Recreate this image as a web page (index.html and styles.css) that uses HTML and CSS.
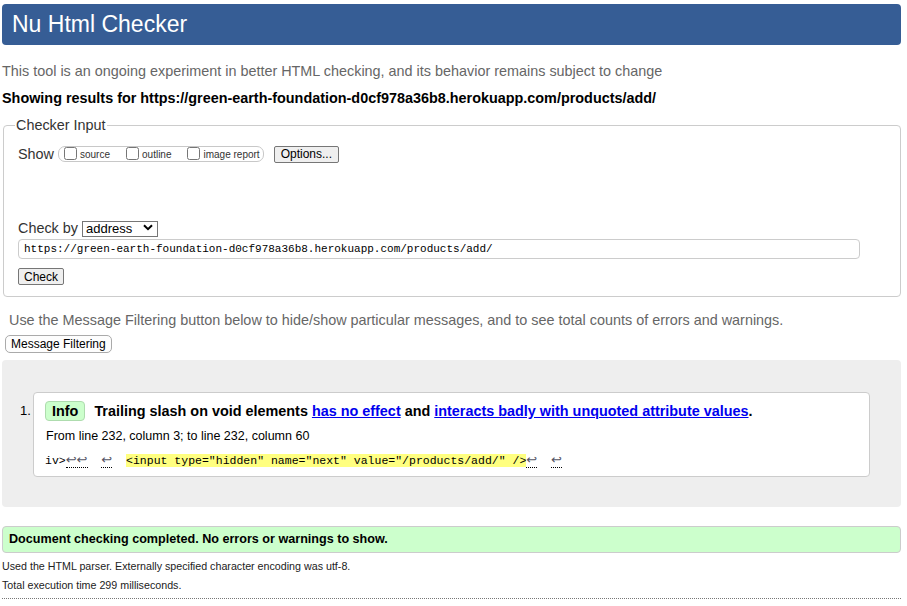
FILE: index.html
```html
<!DOCTYPE html>
<html lang="en">
<head>
<meta charset="utf-8">
<title>Showing results for https://green-earth-foundation-d0cf978a36b8.herokuapp.com/products/add/ - Nu Html Checker</title>
<link rel="stylesheet" href="styles.css">
</head>
<body>
<header class="banner"><h1 class="banner-title">Nu Html Checker</h1></header>
<p class="intro">This tool is an ongoing experiment in better HTML checking, and its behavior remains subject to change</p>
<p class="showing">Showing results for https://green-earth-foundation-d0cf978a36b8.herokuapp.com/products/add/</p>

<form class="checker">
  <div class="fieldset">
    <span class="legend">Checker Input</span>
    <div class="show-row">
      <span class="show-label">Show</span>
      <span class="opts">
        <label class="opt"><input type="checkbox" class="cb"><span>source</span></label>
        <label class="opt"><input type="checkbox" class="cb"><span>outline</span></label>
        <label class="opt"><input type="checkbox" class="cb"><span>image report</span></label>
      </span>
      <button type="button" class="btn btn-options">Options...</button>
    </div>
    <div class="checkby-row">
      <span class="checkby-label">Check by</span>
      <span class="selwrap">
        <select class="sel"><option>address</option></select>
        <svg class="chev" width="10" height="7" viewBox="0 0 10 7"><path d="M1 1.2 L5 5.2 L9 1.2" fill="none" stroke="#000" stroke-width="2"/></svg>
      </span>
    </div>
    <input class="url" type="text" value="https://green-earth-foundation-d0cf978a36b8.herokuapp.com/products/add/">
    <div class="check-row"><button type="button" class="btn btn-check">Check</button></div>
  </div>
</form>

<p class="filter-note">Use the Message Filtering button below to hide/show particular messages, and to see total counts of errors and warnings.</p>
<div class="filter-row"><button type="button" class="btn btn-filter">Message Filtering</button></div>

<section class="results">
  <ol class="msg-list">
    <li class="msg-row">
      <span class="num">1.</span>
      <div class="msg">
        <p class="msg-title"><span class="badge">Info</span><span class="msg-text">Trailing slash on void elements <a href="#" class="lnk">has no effect</a> and <a href="#" class="lnk">interacts badly with unquoted attribute values</a>.</span></p>
        <p class="loc">From line 232, column 3; to line 232, column 60</p>
        <p class="extract"><code class="code">iv&gt;<abbr class="lf">↩↩</abbr>  <abbr class="lf">↩</abbr>  <mark class="hl">&lt;input type="hidden" name="next" value="/products/add/" /&gt;</mark><abbr class="lf">↩</abbr>  <abbr class="lf">↩</abbr></code></p>
      </div>
    </li>
  </ol>
</section>

<p class="success">Document checking completed. No errors or warnings to show.</p>
<p class="meta meta-first">Used the HTML parser. Externally specified character encoding was utf-8.</p>
<p class="meta">Total execution time 299 milliseconds.</p>
<div class="rule"></div>
</body>
</html>
```

FILE: styles.css
```css
html { background: #fff; }
body {
  margin: 0;
  padding: 4px 6px 0 2px;
  font-family: "Liberation Sans", Arial, sans-serif;
  font-size: 14.4px;
  color: #000;
}
p { margin: 0; }

.banner-title {
  margin: 0;
  height: 41px;
  line-height: 41px;
  padding-left: 10px;
  background: #365d95;
  color: #fff;
  font-size: 23px;
  font-weight: normal;
  border-radius: 4px;
}

.intro {
  margin-top: 18px;
  line-height: 16px;
  color: #666;
}
.showing {
  margin-top: 11px;
  line-height: 16px;
  font-weight: bold;
}

.checker { margin: 0; }
.fieldset {
  position: relative;
  margin: 19px 0 0 1px;
  border: 1px solid #ccc;
  border-radius: 4px;
  padding: 20px 13px 11px 14px;
}
.legend {
  position: absolute;
  top: -9px;
  left: 11px;
  padding: 0 1px;
  background: #fff;
  line-height: 16px;
  color: #333;
}

.show-row {
  display: flex;
  align-items: center;
  height: 16px;
}
.show-label { color: #333; line-height: 16px; }
.opts {
  display: inline-flex;
  align-items: center;
  gap: 16px;
  height: 14px;
  margin-left: 4px;
  padding: 0 3px 0 5px;
  border: 1px solid #c8c8c8;
  border-radius: 7px;
}
.opt {
  display: inline-flex;
  align-items: center;
  gap: 3px;
  font-size: 10px;
  color: #333;
}
.cb {
  margin: 0;
  width: 13px;
  height: 13px;
  position: relative;
  top: -1px;
}

.btn {
  font-family: "Liberation Sans", Arial, sans-serif;
  font-size: 12px;
  color: #000;
  background: #efefef;
  border: 1px solid #767676;
  border-radius: 2px;
  padding: 0 5px;
  margin: 0;
  line-height: 14px;
  height: 17px;
}
.btn-options { margin-left: 10px; padding: 0 6px; }

.checkby-row {
  display: flex;
  align-items: center;
  height: 16px;
  margin-top: 58px;
}
.checkby-label { color: #333; }
.selwrap {
  position: relative;
  display: inline-block;
  margin-left: 4px;
  height: 16px;
}
.sel {
  appearance: none;
  -webkit-appearance: none;
  width: 76px;
  height: 16px;
  margin: 0;
  padding: 0 0 0 3px;
  border: 1px solid #767676;
  border-radius: 0;
  background: #fff;
  font-family: "Liberation Sans", Arial, sans-serif;
  font-size: 13px;
  line-height: 14px;
  color: #000;
}
.chev {
  position: absolute;
  right: 5px;
  top: 4px;
  pointer-events: none;
}

.url {
  display: block;
  box-sizing: border-box;
  width: 842px;
  height: 20px;
  margin: 3px 0 0;
  padding: 0 5px;
  border: 1px solid #ccc;
  border-radius: 4px;
  font-family: "Liberation Mono", "DejaVu Sans Mono", monospace;
  font-size: 11px;
  color: #000;
  background: #fff;
}
.check-row { margin-top: 9px; display: flex; }

.filter-note {
  margin-top: 15px;
  padding-left: 7px;
  line-height: 16px;
  color: #666;
}
.filter-row { margin-top: 7px; padding-left: 3px; display: flex; }
.btn-filter {
  background: #fdfdfd;
  border: 1px solid #aaa;
  border-radius: 5px;
  height: 18px;
}

.results {
  margin-top: 7px;
  background: #eee;
  border-radius: 4px;
  padding: 32px 31px 30px 18px;
}
.msg-list { margin: 0; padding: 0; list-style: none; }
.msg-row { display: flex; align-items: flex-start; }
.num {
  width: 13px;
  flex: none;
  margin-top: 11px;
  line-height: 16px;
  font-size: 13px;
}
.msg {
  flex: 1;
  background: #fff;
  border: 1px solid #ccc;
  border-radius: 4px;
  padding: 8px 11px 9px 11px;
}
.msg-title {
  display: flex;
  align-items: center;
  height: 20px;
  font-weight: bold;
}
.badge {
  box-sizing: border-box;
  height: 20px;
  line-height: 18px;
  padding: 0 6px;
  background: #ccffcc;
  border: 1px solid #aedcae;
  border-radius: 4px;
  color: #000;
}
.msg-text { margin-left: 9px; }
.lnk { color: #0000ee; text-decoration: underline; }

.loc {
  margin-top: 7px;
  padding-left: 1px;
  line-height: 16px;
  font-size: 12.5px;
}
.extract {
  margin-top: 7px;
  height: 16px;
  line-height: 16px;
  overflow: visible;
}
.code {
  font-family: "Liberation Mono", "DejaVu Sans Mono", monospace;
  font-size: 11.5px;
  line-height: 16px;
  white-space: pre;
}
.lf {
  font-family: "DejaVu Sans", sans-serif;
  font-size: 13px;
  line-height: 12px;
  color: #556;
  text-decoration: none;
  border-bottom: 1px dotted #000;
}
.hl { background: #ffff80; color: #000; }

.success {
  margin-top: 19px;
  line-height: 16px;
  padding: 4px 6px 5px;
  background: #ccffcc;
  border: 1px solid #ccc;
  border-radius: 4px;
  font-weight: bold;
  font-size: 12.6px;
}
.meta {
  margin-top: 6px;
  font-size: 10.7px;
  line-height: 13px;
  color: #222;
}
.meta-first { margin-top: 7px; }
.rule {
  margin-top: 6px;
  border-top: 1px dotted #777;
}
```
